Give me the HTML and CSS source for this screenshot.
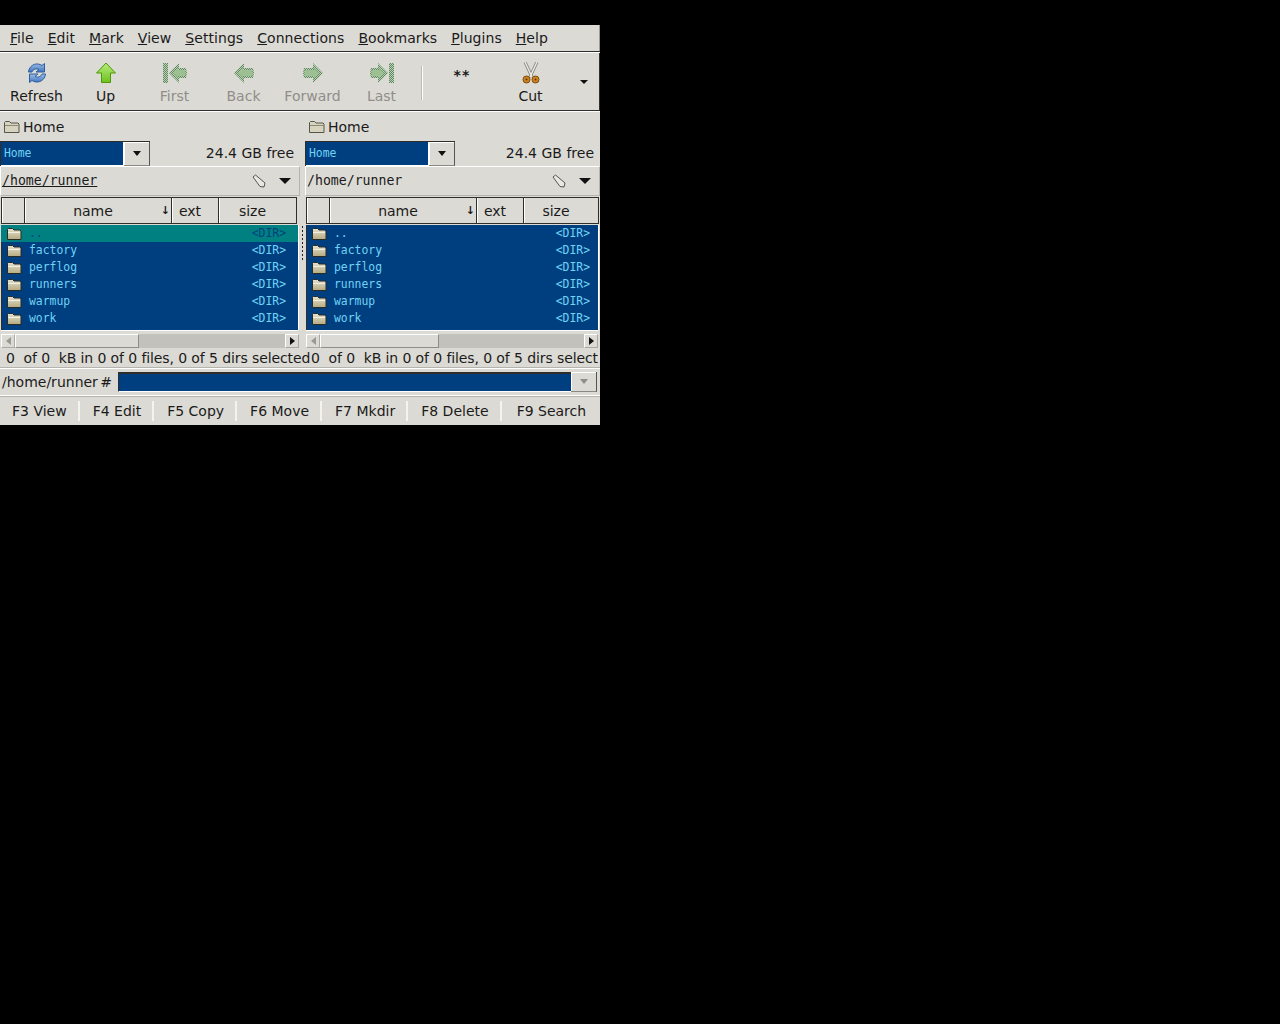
FILE: index.html
```html
<!DOCTYPE html>
<html lang="en">
<head>
  <meta charset="UTF-8" />
  <title>Double Commander</title>
  <link rel="stylesheet" href="styles.css">
</head>
<body>
  <svg class="defs" width="0" height="0">
    <defs>
      <pattern id="dither" width="2" height="2" patternUnits="userSpaceOnUse">
        <rect width="2" height="2" fill="#bcd0b6"/>
        <rect width="1" height="1" fill="#5f8a5f"/>
        <rect x="1" y="1" width="1" height="1" fill="#5f8a5f"/>
      </pattern>
      <linearGradient id="folderFill" x1="0" y1="0" x2="0" y2="1">
        <stop offset="0" stop-color="#e4e1d2"/>
        <stop offset="1" stop-color="#b5ab80"/>
      </linearGradient>
      <linearGradient id="refreshFill" x1="0" y1="0" x2="0" y2="1">
        <stop offset="0" stop-color="#9dbce6"/>
        <stop offset="1" stop-color="#3f75c0"/>
      </linearGradient>
      <linearGradient id="upFill" x1="0" y1="0" x2="0" y2="1">
        <stop offset="0" stop-color="#b8ec7c"/>
        <stop offset="1" stop-color="#6cc21e"/>
      </linearGradient>
      <symbol id="folder" viewBox="0 0 16 14">
        <path d="M1.500 12.500V2.500l1-1h4l1.500 1.500h6l1 1v8.500z" fill="url(#folderFill)" stroke="#2b2b24"/>
        <path d="M2 5.500h12" stroke="#f2efe0"/>
      </symbol>
      <symbol id="folderOpen" viewBox="0 0 18 14">
        <path d="M1.500 12.500V2.500l1-1h4l1.500 1.500h7l1 1v8.500z" fill="#d6d4bf" stroke="#55554a"/>
        <path d="M2 5.500h14" stroke="#8d8b74"/>
      </symbol>
    </defs>
  </svg>

  <div class="window">
    <nav class="menubar">
      <span><u>F</u>ile</span>
      <span><u>E</u>dit</span>
      <span><u>M</u>ark</span>
      <span><u>V</u>iew</span>
      <span><u>S</u>ettings</span>
      <span><u>C</u>onnections</span>
      <span><u>B</u>ookmarks</span>
      <span><u>P</u>lugins</span>
      <span><u>H</u>elp</span>
    </nav>

    <div class="toolbar">
      <div class="tool">
        <svg class="tool-icon" viewBox="0 0 22 22">
          <path d="M2.500 10C3 4 9 0.500 14 2.500l2 1 2.500-2v8.500h-8.500l3-2.500c-3-1.500-6 0-7 2.500z" fill="url(#refreshFill)" stroke="#2f5f9f"/>
          <path d="M19.500 12c-.5 6-6.500 9.500-11.500 7.500l-2-1-2.500 2V12H12l-3 2.500c3 1.500 6 0 7-2.500z" fill="url(#refreshFill)" stroke="#2f5f9f"/>
        </svg>
        <span>Refresh</span>
      </div>
      <div class="tool">
        <svg class="tool-icon" viewBox="0 0 22 22">
          <path d="M11 1l9.500 10H15.500v9.500h-9V11H1.500z" fill="url(#upFill)" stroke="#4e9a06"/>
        </svg>
        <span>Up</span>
      </div>
      <div class="tool disabled">
        <svg class="tool-icon wide" viewBox="0 0 26 22">
          <path d="M1 1h5v20H1zM17 1v5h7l1 5-1 5h-7v5L7 11z" fill="url(#dither)"/>
          <path d="M16 6v2h7l.500 3-.500 3h-7v2l-5-5z" fill="#9cc092"/>
        </svg>
        <span>First</span>
      </div>
      <div class="tool disabled">
        <svg class="tool-icon" viewBox="0 0 22 22">
          <path d="M11 1v5h9l1 5-1 5h-9v5L1 11z" fill="url(#dither)"/>
          <path d="M10 6v2h9l.500 3-.500 3h-9v2l-5-5z" fill="#9cc092"/>
        </svg>
        <span>Back</span>
      </div>
      <div class="tool disabled">
        <svg class="tool-icon" viewBox="0 0 22 22">
          <path d="M11 1v5H2l-1 5 1 5h9v5l10-10z" fill="url(#dither)"/>
          <path d="M12 6v2H3l-.500 3 .500 3h9v2l5-5z" fill="#9cc092"/>
        </svg>
        <span>Forward</span>
      </div>
      <div class="tool disabled">
        <svg class="tool-icon wide" viewBox="0 0 26 22">
          <path d="M20 1h5v20h-5zM9 1v5H2l-1 5 1 5h7v5l10-10z" fill="url(#dither)"/>
          <path d="M10 6v2H3l-.500 3 .500 3h7v2l5-5z" fill="#9cc092"/>
        </svg>
        <span>Last</span>
      </div>
      <div class="tool-sep"></div>
      <div class="tool stars"><b>**</b></div>
      <div class="tool">
        <svg class="tool-icon" viewBox="0 0 22 22">
          <g fill="none">
            <path d="M5 0l7 15M17 0l-7 15" stroke="#85857f" stroke-width="3"/>
            <path d="M5 0l7 15M17 0l-7 15" stroke="#ecebe6" stroke-width="1.400"/>
          </g>
          <circle cx="6.500" cy="17.500" r="3.500" fill="#d08420" stroke="#7a4a0c"/>
          <circle cx="15.500" cy="17.500" r="3.500" fill="#d08420" stroke="#7a4a0c"/>
          <circle cx="6.500" cy="17.500" r="1" fill="#5a3608"/>
          <circle cx="15.500" cy="17.500" r="1" fill="#5a3608"/>
        </svg>
        <span>Cut</span>
      </div>
      <div class="tool-more"><i class="arrow"></i></div>
    </div>

    <div class="panels">
      <section class="panel">
        <div class="panel-title"><svg class="title-icon"><use href="#folderOpen"/></svg>Home</div>
        <div class="drive-row">
          <div class="drive-combo"><span class="drive-name">Home</span><span class="drive-btn"><i class="arrow small"></i></span></div>
          <span class="free">24.4 GB free</span>
        </div>
        <div class="path-row">
          <span class="path active">/home/runner</span>
          <svg class="tag" viewBox="0 0 14 14"><path d="M1 3l2.500-2 9.500 8-1 4-4-.5z" fill="#e8e8e4" stroke="#55554f"/></svg>
          <i class="arrow big"></i>
        </div>
        <div class="columns">
          <span class="col col-blank"></span>
          <span class="col col-name">name<em class="sort">↓</em></span>
          <span class="col col-ext">ext</span>
          <span class="col col-size">size</span>
        </div>
        <ul class="files">
          <li class="file cursor"><svg class="file-icon"><use href="#folder"/></svg><span class="file-name">..</span><span class="file-size">&lt;DIR&gt;</span></li>
          <li class="file"><svg class="file-icon"><use href="#folder"/></svg><span class="file-name">factory</span><span class="file-size">&lt;DIR&gt;</span></li>
          <li class="file"><svg class="file-icon"><use href="#folder"/></svg><span class="file-name">perflog</span><span class="file-size">&lt;DIR&gt;</span></li>
          <li class="file"><svg class="file-icon"><use href="#folder"/></svg><span class="file-name">runners</span><span class="file-size">&lt;DIR&gt;</span></li>
          <li class="file"><svg class="file-icon"><use href="#folder"/></svg><span class="file-name">warmup</span><span class="file-size">&lt;DIR&gt;</span></li>
          <li class="file"><svg class="file-icon"><use href="#folder"/></svg><span class="file-name">work</span><span class="file-size">&lt;DIR&gt;</span></li>
        </ul>
        <div class="hscroll">
          <span class="sb-btn"><i class="tri tri-left"></i></span>
          <span class="sb-thumb"></span>
          <span class="sb-track"></span>
          <span class="sb-btn"><i class="tri tri-right"></i></span>
        </div>
        <div class="status">0&nbsp; of 0&nbsp; kB in 0 of 0 files, 0 of 5 dirs selected</div>
      </section>

      <div class="splitter"></div>

      <section class="panel right">
        <div class="panel-title"><svg class="title-icon"><use href="#folderOpen"/></svg>Home</div>
        <div class="drive-row">
          <div class="drive-combo"><span class="drive-name">Home</span><span class="drive-btn"><i class="arrow small"></i></span></div>
          <span class="free">24.4 GB free</span>
        </div>
        <div class="path-row">
          <span class="path">/home/runner</span>
          <svg class="tag" viewBox="0 0 14 14"><path d="M1 3l2.500-2 9.500 8-1 4-4-.5z" fill="#e8e8e4" stroke="#55554f"/></svg>
          <i class="arrow big"></i>
        </div>
        <div class="columns">
          <span class="col col-blank"></span>
          <span class="col col-name">name<em class="sort">↓</em></span>
          <span class="col col-ext">ext</span>
          <span class="col col-size">size</span>
        </div>
        <ul class="files">
          <li class="file"><svg class="file-icon"><use href="#folder"/></svg><span class="file-name">..</span><span class="file-size">&lt;DIR&gt;</span></li>
          <li class="file"><svg class="file-icon"><use href="#folder"/></svg><span class="file-name">factory</span><span class="file-size">&lt;DIR&gt;</span></li>
          <li class="file"><svg class="file-icon"><use href="#folder"/></svg><span class="file-name">perflog</span><span class="file-size">&lt;DIR&gt;</span></li>
          <li class="file"><svg class="file-icon"><use href="#folder"/></svg><span class="file-name">runners</span><span class="file-size">&lt;DIR&gt;</span></li>
          <li class="file"><svg class="file-icon"><use href="#folder"/></svg><span class="file-name">warmup</span><span class="file-size">&lt;DIR&gt;</span></li>
          <li class="file"><svg class="file-icon"><use href="#folder"/></svg><span class="file-name">work</span><span class="file-size">&lt;DIR&gt;</span></li>
        </ul>
        <div class="hscroll">
          <span class="sb-btn"><i class="tri tri-left"></i></span>
          <span class="sb-thumb"></span>
          <span class="sb-track"></span>
          <span class="sb-btn"><i class="tri tri-right"></i></span>
        </div>
        <div class="status">0&nbsp; of 0&nbsp; kB in 0 of 0 files, 0 of 5 dirs selected</div>
      </section>
    </div>

    <div class="cmdline">
      <span class="cmd-label">/home/runner #</span>
      <div class="cmd-input"></div>
      <span class="cmd-btn"><i class="arrow small muted"></i></span>
    </div>

    <div class="fnbar">
      <span class="fn">F3 View</span>
      <span class="fn">F4 Edit</span>
      <span class="fn">F5 Copy</span>
      <span class="fn">F6 Move</span>
      <span class="fn">F7 Mkdir</span>
      <span class="fn">F8 Delete</span>
      <span class="fn">F9 Search</span>
    </div>
  </div>
</body>
</html>
```

FILE: styles.css
```css
* {
  box-sizing: border-box;
}
html, body {
  margin: 0;
  background: #000;
  height: 100%;
}
body {
  font-family: "DejaVu Sans", sans-serif;
  font-size: 14px;
  color: #1a1a1a;
}
.defs {
  position: absolute;
}
.window {
  width: 600px;
  height: 400px;
  margin-top: 25px;
  background: #dcdad5;
  overflow: hidden;
}

/* menu */
.menubar {
  height: 28px;
  padding: 4px 0 0 10px;
  display: flex;
  gap: 14px;
  letter-spacing: 0.06px;
  border-bottom: 1px solid #fff;
  box-shadow: inset 0 -1px 0 #2e2e2b, inset -1px 0 0 #9d9b96;
  line-height: 18px;
}

/* toolbar */
.toolbar {
  height: 59px;
  padding-left: 2px;
  display: flex;
  border-bottom: 1px solid #fff;
  box-shadow: inset 0 -1px 0 #2e2e2b, inset -1px 0 0 #2e2e2b;
}
.tool {
  width: 69px;
  height: 58px;
  padding-top: 9px;
  display: flex;
  flex-direction: column;
  align-items: center;
}
.tool span {
  margin-top: 3px;
  line-height: 18px;
}
.tool-icon {
  width: 22px;
  height: 22px;
}
.tool-icon.wide {
  width: 26px;
}
.disabled span {
  color: #8f8e8a;
}
.tool-sep {
  width: 2px;
  height: 34px;
  margin: 13px 4px 0 5px;
  background: linear-gradient(to right, #bcbab5 50%, #fff 50%);
}
.stars b {
  font-size: 14px;
  line-height: 14px;
  font-family: "DejaVu Sans Mono", monospace;
  margin-top: 6px;
}
.tool-more {
  margin-left: 15px;
  padding-top: 27px;
}
.arrow {
  display: block;
  width: 0;
  height: 0;
  border-left: 4px solid transparent;
  border-right: 4px solid transparent;
  border-top: 4px solid #111;
}
.arrow.small {
  border-left-width: 4.500px;
  border-right-width: 4.500px;
  border-top-width: 5px;
}
.arrow.big {
  border-left-width: 6px;
  border-right-width: 6px;
  border-top-width: 6px;
}
.arrow.muted {
  border-top-color: #8e8d89;
}

/* panels */
.panels {
  display: flex;
}
.panel {
  width: 300px;
  flex: none;
}
.panel.right {
  width: 295px;
}
.splitter {
  width: 5px;
  height: 222px;
  flex: none;
  padding: 113px 0 73px;
  background: radial-gradient(circle, #222 0.8px, transparent 1px) 1px 0 / 3px 4px repeat-y content-box;
}
.panel-title {
  height: 29px;
  padding: 1px 0 0 3px;
  display: flex;
  align-items: center;
  line-height: 20px;
}
.title-icon {
  width: 18px;
  height: 14px;
  margin-right: 2px;
}
.drive-row {
  height: 24px;
  display: flex;
  align-items: center;
  justify-content: space-between;
  padding-right: 6px;
}
.drive-combo {
  width: 150px;
  height: 25px;
  display: flex;
  border-top: 1px solid #2e2e2b;
  border-left: 1px solid #2e2e2b;
  background: #fff;
}
.drive-name {
  width: 122px;
  height: 23px;
  padding-left: 3px;
  background: #003f7f;
  color: #70d3f6;
  font: 11.400px/22px "DejaVu Sans Mono", monospace;
}
.drive-btn,
.cmd-btn {
  flex: 1;
  display: flex;
  align-items: center;
  justify-content: center;
  background: #dcdad5;
  margin-left: 1px;
  border-right: 1px solid #555;
  border-bottom: 1px solid #8a8883;
  box-shadow: inset 1px 1px 0 #fff;
}
.free {
  line-height: 18px;
}
.path-row {
  height: 30px;
  margin-top: 1px;
  padding: 0 8px 0 1px;
  display: flex;
  align-items: center;
  border: 1px solid #b5b3ae;
  border-top-color: #fff;
  border-left-color: #fff;
}
.path {
  flex: 1;
  font: 13.200px/18px "DejaVu Sans Mono", monospace;
}
.path.active {
  text-decoration: underline;
}
.tag {
  width: 14px;
  height: 14px;
  margin-right: 13px;
}
.columns {
  height: 29px;
  padding: 1px 0 0 1px;
  display: flex;
}
.col {
  height: 27px;
  padding-right: 10px;
  text-align: center;
  line-height: 26px;
  position: relative;
  border-right: 1px solid #2e2e2b;
  border-bottom: 1px solid #2e2e2b;
  border-top: 1px solid #2e2e2b;
  box-shadow: inset 1px 0 0 #fff;
}
.col-blank {
  width: 24px;
  border-left: 1px solid #2e2e2b;
}
.col-name {
  width: 147px;
}
.col-ext {
  width: 47px;
}
.col-size {
  width: 78px;
}
.right .col-size {
  width: 75px;
}
.sort {
  position: absolute;
  right: 1px;
  top: 0;
  font-style: normal;
  font-size: 11px;
  font-weight: bold;
}
.files {
  list-style: none;
  margin: 0 1px;
  padding: 0;
  width: 297px;
  height: 105px;
  background: #003f7f;
  color: #70d3f6;
  font: 11.400px/17px "DejaVu Sans Mono", monospace;
  box-shadow: 0 1px 0 #fff, 1px 0 0 #fff, inset 1px 0 0 #2e2e2b;
}
.right .files {
  width: 292px;
}
.file {
  height: 17px;
  display: flex;
  align-items: center;
  padding: 0 12px 0 5px;
}
.right .file {
  padding-right: 8px;
}
.file-icon {
  width: 16px;
  height: 14px;
  margin-right: 7px;
  flex: none;
}
.file-name {
  flex: 1;
}
.cursor {
  background: #008080;
  color: #003f7f;
}
.hscroll {
  height: 14px;
  margin: 4px 1px 0;
  display: flex;
  background: #c3c1bc;
}
.right .hscroll {
  margin-right: 2px;
}
.sb-btn {
  width: 14px;
  flex: none;
  display: flex;
  align-items: center;
  justify-content: center;
  background: #dcdad5;
  border: 1px solid #aaa8a3;
  border-top-color: #fff;
  border-left-color: #fff;
}
.sb-thumb {
  width: 124px;
  background: #dcdad5;
  border: 1px solid #8f8d88;
  border-top-color: #fff;
  border-left-color: #fff;
}
.right .sb-thumb {
  width: 119px;
}
.sb-track {
  flex: 1;
}
.tri {
  width: 0;
  height: 0;
  border-top: 4px solid transparent;
  border-bottom: 4px solid transparent;
}
.tri-left {
  border-right: 5px solid #9a9893;
}
.tri-right {
  border-left: 5px solid #111;
}
.status {
  height: 20px;
  padding-left: 6px;
  line-height: 20px;
  letter-spacing: -0.1px;
  white-space: nowrap;
}
.panel.right .status {
  width: 293px;
  overflow: hidden;
}

/* command line */
.cmdline {
  height: 28px;
  padding: 3px 3px 3px 2px;
  display: flex;
  align-items: stretch;
  border-top: 1px solid #fff;
  border-bottom: 1px solid #fff;
  box-shadow: 0 -1px 0 #b5b3ae, 0 1px 0 #b5b3ae;
}
.cmd-label {
  width: 115px;
  flex: none;
  line-height: 21px;
  word-spacing: -2px;
}
.cmd-input {
  flex: 1;
  margin-left: 1px;
  background: #003f7f;
  border-top: 2px solid #2e2e2b;
  border-left: 1px solid #2e2e2b;
  border-bottom: 1px solid #fff;
}
.cmd-btn {
  flex: 0 0 26px;
  margin: 0;
}

/* function keys */
.fnbar {
  height: 28px;
  margin-top: 1px;
  display: flex;
  align-items: center;
}
.fn {
  height: 20px;
  line-height: 20px;
  padding: 0 11px 0 13px;
  border-right: 2px solid;
  border-image: linear-gradient(to right, #a8a6a1 50%, #f4f3f0 50%) 1;
  white-space: nowrap;
}
.fn:first-child {
  padding-left: 12px;
}
.fn:last-child {
  border-right: none;
  padding-left: 15px;
}
```
